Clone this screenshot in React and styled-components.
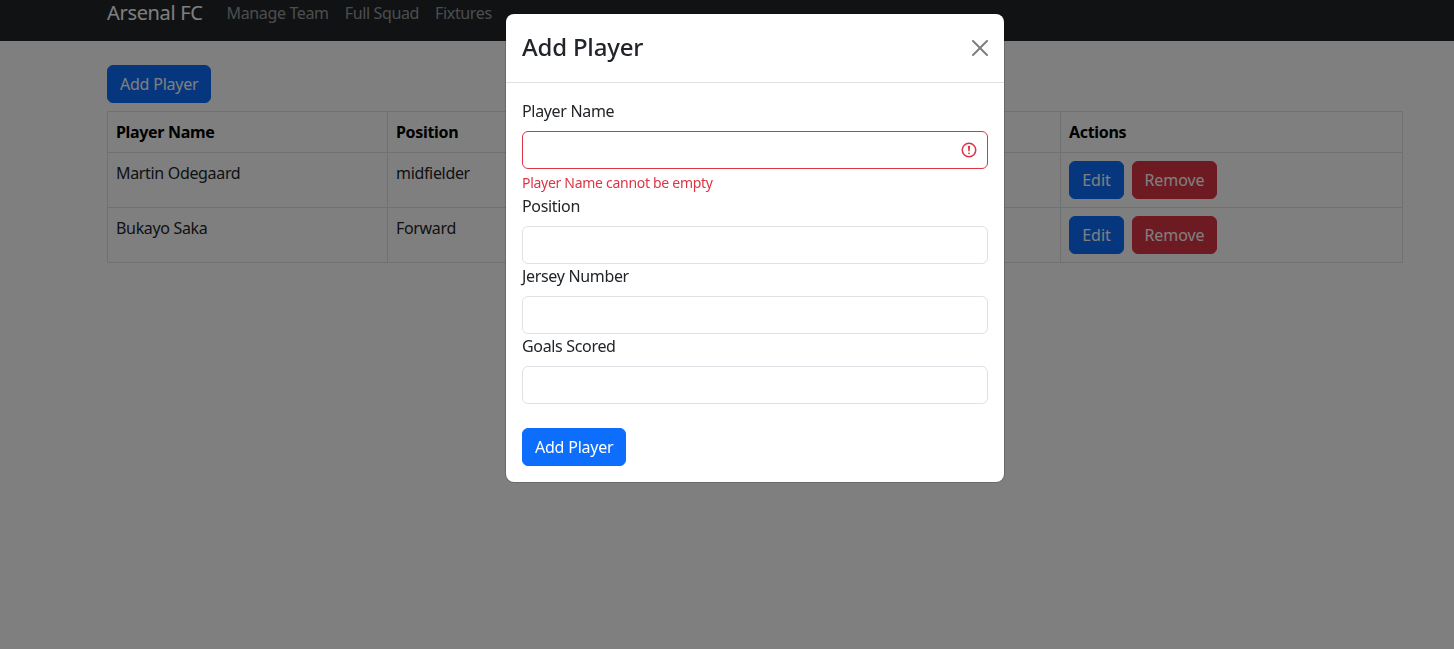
import styled, { createGlobalStyle } from "styled-components";

const players = [
  { name: "Martin Odegaard", position: "midfielder" },
  { name: "Bukayo Saka", position: "Forward" },
];

const fields = ["Position", "Jersey Number", "Goals Scored"];

function App() {
  return (
    <>
      <GlobalStyle />
      <Navbar>
        <Brand>Arsenal FC</Brand>
        <NavLinks>
          <NavLink>Manage Team</NavLink>
          <NavLink>Full Squad</NavLink>
          <NavLink>Fixtures</NavLink>
        </NavLinks>
      </Navbar>
      <Page>
        <Button>Add Player</Button>
        <Table>
          <colgroup>
            <col width="280" />
            <col width="280" />
            <col width="197" />
            <col width="196" />
            <col width="342" />
          </colgroup>
          <thead>
            <tr>
              <th>Player Name</th>
              <th>Position</th>
              <th />
              <th />
              <th>Actions</th>
            </tr>
          </thead>
          <tbody>
            {players.map((p) => (
              <tr key={p.name}>
                <td>{p.name}</td>
                <td>{p.position}</td>
                <td />
                <td />
                <td>
                  <Actions>
                    <ActionButton>Edit</ActionButton>
                    <ActionButton $danger>Remove</ActionButton>
                  </Actions>
                </td>
              </tr>
            ))}
          </tbody>
        </Table>
      </Page>
      <Backdrop />
      <Modal>
        <ModalHeader>
          <ModalTitle>Add Player</ModalTitle>
          <CloseButton aria-label="Close">
            <svg width="16" height="16" viewBox="0 0 16 16" fill="#000">
              <path d="M.293.293a1 1 0 0 1 1.414 0L8 6.586 14.293.293a1 1 0 1 1 1.414 1.414L9.414 8l6.293 6.293a1 1 0 0 1-1.414 1.414L8 9.414l-6.293 6.293a1 1 0 0 1-1.414-1.414L6.586 8 .293 1.707a1 1 0 0 1 0-1.414z" />
            </svg>
          </CloseButton>
        </ModalHeader>
        <ModalBody>
          <Label>Player Name</Label>
          <InputWrap>
            <Input $invalid />
            <InvalidIcon width="18" height="18" viewBox="0 0 12 12" fill="none" stroke="#dc3545">
              <circle cx="6" cy="6" r="4.5" />
              <path strokeLinejoin="round" d="M5.8 3.6h.4L6 6.5z" />
              <circle cx="6" cy="8.2" r=".6" fill="#dc3545" stroke="none" />
            </InvalidIcon>
          </InputWrap>
          <ErrorText>Player Name cannot be empty</ErrorText>
          {fields.map((f) => (
            <div key={f}>
              <Label>{f}</Label>
              <Input />
            </div>
          ))}
          <SubmitRow>
            <Button>Add Player</Button>
          </SubmitRow>
        </ModalBody>
      </Modal>
    </>
  );
}

export default App;

const GlobalStyle = createGlobalStyle`
  * {
    box-sizing: border-box;
  }

  body {
    margin: 0;
    background: #fff;
    color: #212529;
    font-family: "Noto Sans", "Open Sans", sans-serif;
    font-size: 16px;
    line-height: 24px;
    letter-spacing: -0.33px;
    overflow: hidden;
  }
`;

const Navbar = styled.nav`
  height: 41px;
  padding: 0 0 15px 107px;
  display: flex;
  align-items: center;
  background: #212529;
`;

const Brand = styled.span`
  color: #fff;
  font-size: 20px;
  margin-right: 16px;
`;

const NavLinks = styled.div`
  display: flex;
`;

const NavLink = styled.span`
  color: rgba(255, 255, 255, 0.55);
  padding: 0 8px;
  letter-spacing: -0.36px;
`;

const Page = styled.main`
  padding: 24px 51px 0 107px;
`;

const Button = styled.button`
  height: 38px;
  padding: 0 12px;
  border: 1px solid #0d6efd;
  border-radius: 6px;
  background: #0d6efd;
  color: #fff;
  font: inherit;
  letter-spacing: -0.22px;
`;

const ActionButton = styled(Button)`
  width: ${(p) => (p.$danger ? "85px" : "55px")};
  padding: 0;
  border-color: ${(p) => (p.$danger ? "#dc3545" : "#0d6efd")};
  background: ${(p) => (p.$danger ? "#dc3545" : "#0d6efd")};
  letter-spacing: -0.05px;
`;

const Table = styled.table`
  width: 1295px;
  margin-top: 8px;
  border-collapse: collapse;
  table-layout: fixed;

  th,
  td {
    padding: 8px;
    border: 1px solid #dee2e6;
    text-align: left;
    vertical-align: top;
    color: #212529;
  }

  th {
    font-weight: 700;
    color: #000;
  }

  td {
    height: 55px;
  }
`;

const Actions = styled.div`
  display: flex;
  gap: 8px;
`;

const Backdrop = styled.div`
  position: fixed;
  inset: 0;
  background: rgba(0, 0, 0, 0.5);
`;

const Modal = styled.div`
  position: fixed;
  top: 14px;
  left: 506px;
  width: 498px;
  height: 468px;
  background: #fff;
  border-radius: 8px;
  box-shadow: 0 0 0 1px rgba(0, 0, 0, 0.175);
`;

const ModalHeader = styled.header`
  height: 69px;
  padding: 0 16px;
  display: flex;
  align-items: center;
  justify-content: space-between;
  border-bottom: 1px solid #dee2e6;
`;

const ModalTitle = styled.h5`
  margin: 0 0 2px;
  font-size: 24px;
  font-weight: 500;
  line-height: 36px;
  letter-spacing: -0.2px;
`;

const CloseButton = styled.button`
  width: 16px;
  height: 16px;
  padding: 0;
  border: 0;
  background: none;
  opacity: 0.5;
  display: flex;
`;

const ModalBody = styled.div`
  padding: 16px;
`;

const Label = styled.label`
  display: block;
  margin-bottom: 8px;
`;

const InputWrap = styled.div`
  position: relative;
`;

const Input = styled.input`
  display: block;
  width: 100%;
  height: 38px;
  padding: 6px 12px;
  border: 1px solid ${(p) => (p.$invalid ? "#dc3545" : "#dee2e6")};
  border-radius: 6px;
  background: #fff;
  font: inherit;
`;

const InvalidIcon = styled.svg`
  position: absolute;
  top: 10px;
  right: 10px;
`;

const ErrorText = styled.div`
  margin: 3px 0 1px;
  color: #dc3545;
  font-size: 14px;
  line-height: 21px;
  letter-spacing: -0.29px;
`;

const SubmitRow = styled.div`
  margin-top: 24px;
`;
